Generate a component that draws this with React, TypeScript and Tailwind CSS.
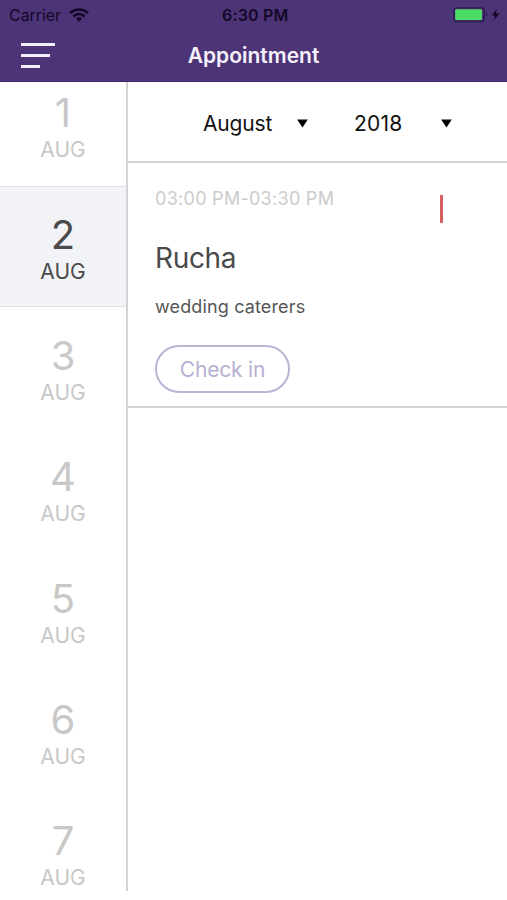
const days = [1, 2, 3, 4, 5, 6, 7];
const SELECTED = 2;

function StatusBar() {
  return (
    <div className="relative flex h-[29px] items-center justify-between pl-[9px] pr-[6px] text-[#120828]">
      <div className="flex items-center gap-[8px]">
        <span className="text-[16px] leading-[20px] tracking-[-0.05px]">Carrier</span>
        <svg width="20" height="14" viewBox="0 0 20 14" fill="none" stroke="currentColor" strokeWidth="2.5">
          <path d="M1 5.2 C6 .2 14 .2 19 5.2" />
          <path d="M4.3 8.5 C7.5 5.3 12.5 5.3 15.7 8.5" />
          <path d="M6.8 10.5 C8.6 8.8 11.4 8.8 13.2 10.5 L10 13.8 Z" fill="currentColor" stroke="none" />
        </svg>
      </div>
      <span className="absolute left-[222px] top-[5px] text-[16px] font-semibold leading-[20px] tracking-[0.2px]">6:30 PM</span>
      <svg width="48" height="16" viewBox="0 0 48 16">
        <rect x=".9" y=".9" width="30.2" height="13.6" rx="2.6" fill="#4c3476" stroke="#2d1b50" strokeWidth="1.4" />
        <rect x="2.2" y="2.3" width="26.8" height="10.8" rx="1" fill="#4cdb64" />
        <path d="M33 5.3 Q35.6 7.7 33 10.1 Z" fill="#2d1b50" />
        <path d="M43.7 1.8 L39 8.6 H42.2 L40.5 13.6 L46.6 6.4 H43 Z" fill="#120828" />
      </svg>
    </div>
  );
}

function Header() {
  return (
    <header className="h-[82px] shrink-0 border-b border-[#3f2867] bg-[#4d3476]">
      <StatusBar />
      <div className="grid h-[52px] grid-cols-[166px_175px_166px] items-center">
        <button className="flex flex-col items-start gap-[8px] pl-[21px]" aria-label="Menu">
          <span className="h-[3px] w-[34px] bg-[#f3effa]" />
          <span className="h-[3px] w-[29px] bg-[#f3effa]" />
          <span className="h-[3px] w-[19px] bg-[#f3effa]" />
        </button>
        <h1 className="pt-[2px] text-center text-[21px] font-semibold leading-[26px] text-[#f5f0fc]">Appointment</h1>
      </div>
    </header>
  );
}

function Day({ day }: { day: number }) {
  const selected = day === SELECTED;
  return (
    <div
      className={
        "flex shrink-0 flex-col items-center " +
        (selected
          ? "h-[121.4px] border-y border-[#dfe1e3] bg-[#f2f3f7] pt-[23.5px] text-[#4a4a4a]"
          : "h-[121.4px] pt-[24.5px] text-[#c8c8c8]")
      }
    >
      <span className="text-[40px] font-[385] leading-[48px]">{day}</span>
      <span className="text-[21px] font-[370] leading-[26px]">AUG</span>
    </div>
  );
}

function Caret() {
  return (
    <svg width="11" height="9" viewBox="0 0 11 9">
      <path d="M.2 .6 H10.8 L5.5 8.4 Z" fill="#000" />
    </svg>
  );
}

export default function App() {
  return (
    <div className="flex h-[900px] w-[507px] flex-col overflow-hidden bg-white font-['Inter',sans-serif]">
      <Header />
      <div className="flex h-[809px]">
        <aside className="flex w-[128px] shrink-0 flex-col overflow-hidden border-r-2 border-[#d3d3d5]">
          <div className="-mt-[17.4px] flex flex-col">
            {days.map((d) => (
              <Day key={d} day={d} />
            ))}
          </div>
        </aside>
        <main className="flex-1">
          <div className="flex h-[81px] items-center border-b-2 border-[#d3d3d3] pl-[75px] pt-[4px] text-[21px] leading-[26px] text-[#111]">
            <span className="w-[94px] tracking-[-0.15px]">August</span>
            <Caret />
            <span className="ml-[46px] w-[87px] tracking-[0.25px]">2018</span>
            <Caret />
          </div>
          <article className="relative flex h-[245px] flex-col items-start border-b-2 border-[#d3d3d3] pl-[27px] pt-[24px]">
            <span className="absolute left-[312px] top-[32px] h-[28px] w-[3px] bg-[#d4615f]" />
            <p className="text-[18px] leading-[24px] tracking-[0.28px] text-[#cbcbcb]">03:00 PM-03:30 PM</p>
            <h2 className="mt-[30px] text-[28px] font-[370] leading-[34px] tracking-[-0.35px] text-[#4a4a4a]">Rucha</h2>
            <p className="mt-[20px] text-[18px] leading-[24px] tracking-[0.14px] text-[#555]">wedding caterers</p>
            <button className="mt-[26px] h-[48px] w-[135px] rounded-full border-2 border-[#b9b4d4] pt-[2px] text-[21px] leading-[26px] tracking-[-0.2px] text-[#b5afd2]">
              Check in
            </button>
          </article>
        </main>
      </div>
    </div>
  );
}
